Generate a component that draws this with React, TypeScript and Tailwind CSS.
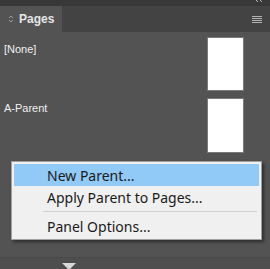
export default function App() {
  return (
    <div
      className="relative w-[270px] h-[269px] overflow-hidden bg-[#535353] flex flex-col"
      style={{ fontFamily: "'Liberation Sans', Arial, sans-serif" }}
    >
      {/* top strip */}
      <div className="h-[6px] bg-[#383838] flex justify-end pr-[7px]">
        <svg width="7" height="3" viewBox="0 0 7 3">
          <path d="M0 0 L2 2 M4 0 L6 2" stroke="#bdbdbd" strokeWidth="1" fill="none" />
        </svg>
      </div>

      {/* tab strip */}
      <div className="h-[26px] bg-[#434343] flex items-stretch">
        <div className="w-[62px] bg-[#535353] flex items-center pl-[8px] gap-[5px]">
          <svg width="6" height="10" viewBox="0 0 6 10" className="text-[#9a9a9a]">
            <path d="M1 4 L3 2 L5 4 M1 6 L3 8 L5 6" fill="none" stroke="currentColor" strokeWidth="1" />
          </svg>
          <span className="text-[12px] font-bold text-[#e6e6e6]">Pages</span>
        </div>
        <div className="flex-1 flex items-center justify-end pr-[8px]">
          <div className="flex flex-col gap-[1px] w-[10px]">
            <div className="h-[1px] bg-[#b5b5b5]" />
            <div className="h-[1px] bg-[#b5b5b5]" />
            <div className="h-[1px] bg-[#b5b5b5]" />
            <div className="h-[1px] bg-[#b5b5b5]" />
          </div>
        </div>
      </div>

      {/* parents list */}
      <div className="flex-1 flex flex-col pt-[5px] gap-[7px]">
        <div className="flex justify-between pl-[4px] pr-[26px]">
          <span className="text-[11px] leading-[13px] text-[#f0f0f0] mt-[6px]">[None]</span>
          <div className="w-[37px] h-[54px] bg-white border border-[#7a7a7a]" />
        </div>
        <div className="flex justify-between pl-[4px] pr-[26px]">
          <span className="text-[11px] leading-[13px] text-[#f0f0f0] mt-[4px]">A-Parent</span>
          <div className="w-[37px] h-[55px] bg-white border border-[#7a7a7a]" />
        </div>
      </div>

      {/* bottom bar */}
      <div className="h-[12px] border-t border-[#494949] bg-[#4e4e4e] flex justify-center pr-[132px]">
        <svg width="14" height="7" viewBox="0 0 14 7" className="mt-[5px]">
          <path d="M0 0 L14 0 L7 7 Z" fill="#d8d8d8" />
        </svg>
      </div>

      {/* context menu */}
      <div
        className="absolute left-[11px] top-[161px] w-[251px] bg-[#f0f0f0] border border-[#a0a0a0] shadow-[2px_2px_3px_rgba(0,0,0,0.45)] px-[2px] py-[2px] text-[14px] text-[#1a1a1a]"
        style={{ fontFamily: "'Noto Sans', 'Open Sans', sans-serif" }}
      >
        <div className="h-[22px] bg-[#91c9f7] pl-[33px] flex items-center">New Parent...</div>
        <div className="h-[22px] pl-[33px] flex items-center">Apply Parent to Pages...</div>
        <div className="h-[7px] flex items-center pl-[29px] pr-[2px]">
          <div className="h-[1px] w-full bg-[#d0d0d0]" />
        </div>
        <div className="h-[22px] pl-[33px] flex items-center">Panel Options...</div>
      </div>
    </div>
  );
}
